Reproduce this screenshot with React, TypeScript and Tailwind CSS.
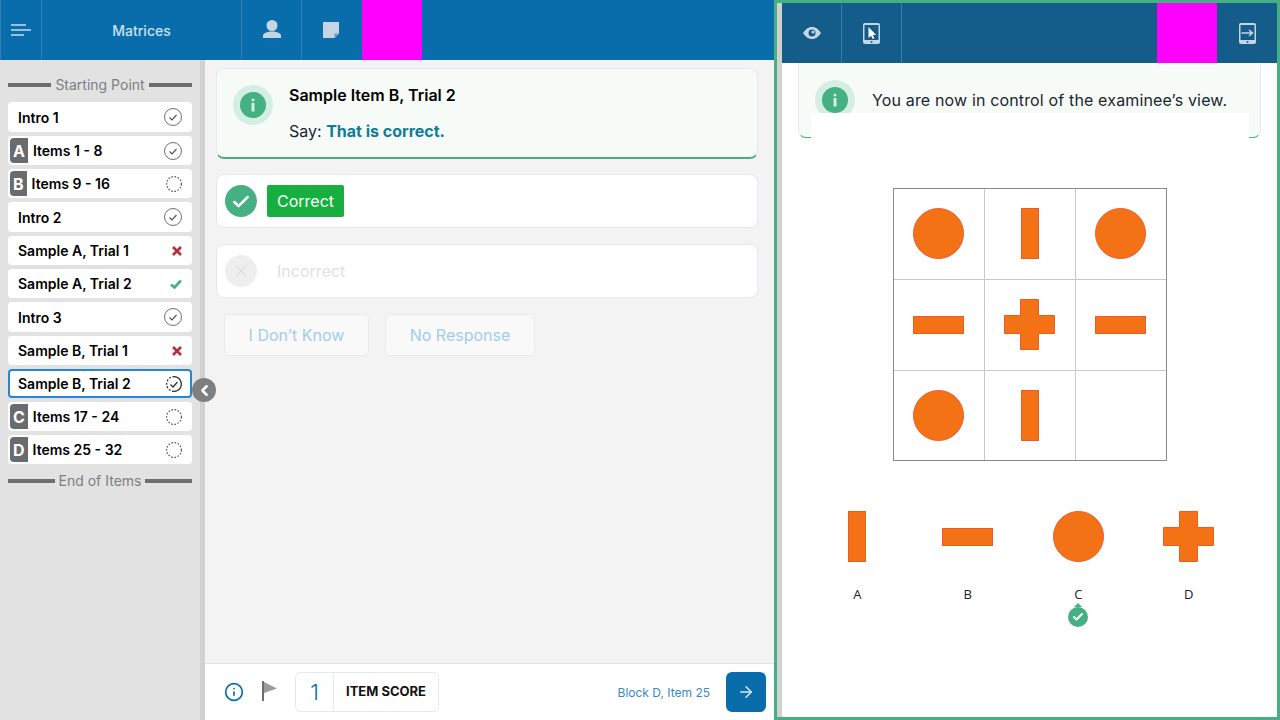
import type { ReactNode } from "react";
import { ArrowRight, Check, ChevronLeft, Info, X } from "lucide-react";

type Status = "done" | "todo" | "wrong" | "right" | "current";

type NavItem = {
  label: string;
  status: Status;
  letter?: string;
  tall?: boolean;
};

const navItems: NavItem[] = [
  { label: "Intro 1", status: "done", tall: true },
  { label: "Items 1 - 8", status: "done", letter: "A" },
  { label: "Items 9 - 16", status: "todo", letter: "B" },
  { label: "Intro 2", status: "done", tall: true },
  { label: "Sample A, Trial 1", status: "wrong" },
  { label: "Sample A, Trial 2", status: "right" },
  { label: "Intro 3", status: "done", tall: true },
  { label: "Sample B, Trial 1", status: "wrong" },
  { label: "Sample B, Trial 2", status: "current" },
  { label: "Items 17 - 24", status: "todo", letter: "C" },
  { label: "Items 25 - 32", status: "todo", letter: "D" },
];

function StatusIcon({ status }: { status: Status }) {
  if (status === "wrong") {
    return (
      <svg width="10" height="10" viewBox="0 0 10 10" stroke="#b92c38" strokeWidth="2.6">
        <path d="M1 1l8 8M9 1l-8 8" />
      </svg>
    );
  }
  if (status === "right") {
    return (
      <svg width="12" height="10" viewBox="0 0 12 10" fill="none" stroke="#45b081" strokeWidth="2.6">
        <path d="M1 5.500l3.500 3L11 1.500" />
      </svg>
    );
  }
  if (status === "todo") {
    return (
      <svg width="16" height="16" viewBox="0 0 16 16" fill="none">
        <circle cx="8" cy="8" r="7.400" stroke="#555" strokeWidth="1.200" strokeDasharray="1.600 1.600" />
      </svg>
    );
  }
  if (status === "current") {
    return (
      <svg width="16" height="16" viewBox="0 0 16 16" fill="none" stroke="#333">
        <path d="M8 .6A7.400 7.400 0 0 1 8 15.400" strokeWidth="1.300" />
        <path d="M8 15.400A7.400 7.400 0 0 1 8 .6" strokeWidth="1.300" strokeDasharray="2 1.600" />
        <path d="M4.500 8.500l2.500 2.500 4.500-5" strokeWidth="1.300" />
      </svg>
    );
  }
  return (
    <svg width="18" height="18" viewBox="0 0 18 18" fill="none">
      <circle cx="9" cy="9" r="8.500" stroke="#6f6f6f" strokeWidth="1" />
      <path d="M5.500 9.500l2.500 2.500 4.500-5" stroke="#555" strokeWidth="1.200" />
    </svg>
  );
}

function SideRow({ item }: { item: NavItem }) {
  const current = item.status === "current";
  return (
    <div
      className={`flex w-[184px] items-center justify-between rounded-[4px] bg-white ${
        item.tall ? "h-[30px]" : "h-[29px]"
      } ${current ? "border-2 border-[#2a85d0] pr-[8px]" : "pr-[10px]"} ${
        item.letter ? "pl-[2px]" : current ? "pl-[8px]" : "pl-[10px]"
      }`}
    >
      <div className="flex h-full items-center">
        {item.letter && (
          <span className="mr-[5px] flex h-[25px] items-center rounded-l-[4px] bg-[#686c6e] px-[3px] text-[16px] font-bold text-white">
            {item.letter}
          </span>
        )}
        <span className="text-[14px] font-semibold text-black">{item.label}</span>
      </div>
      <StatusIcon status={item.status} />
    </div>
  );
}

function SideHeading({ label, className }: { label: string; className: string }) {
  return (
    <div className={`flex h-[20px] w-[184px] items-center gap-[4px] ${className}`}>
      <div className="h-[4px] flex-1 bg-[#6c6f6e]" />
      <span className="pb-[2px] text-[14px] text-[#7b8085]">{label}</span>
      <div className="h-[4px] flex-1 bg-[#6c6f6e]" />
    </div>
  );
}

function InfoBadge() {
  return (
    <div className="flex h-[40px] w-[40px] shrink-0 items-center justify-center rounded-full bg-[#d5eee3]">
      <div className="flex h-[26px] w-[26px] items-center justify-center rounded-full bg-[#45b081]">
        <svg width="6" height="14" viewBox="0 0 6 14" fill="#d5eee3">
          <rect x="1.500" y="0.500" width="3" height="3" rx="1.500" />
          <rect x="1.500" y="5" width="3" height="8.500" rx="0.500" />
        </svg>
      </div>
    </div>
  );
}

function HeaderCell({ children, width }: { children: ReactNode; width: string }) {
  return (
    <div className={`flex h-full items-center justify-center border-r border-[#2f7fb5] ${width}`}>
      {children}
    </div>
  );
}

function TabletIcon({ arrow }: { arrow?: boolean }) {
  return (
    <svg width="17" height="21" viewBox="0 0 17 21">
      <rect width="17" height="21" rx="2" fill="#c5d5e3" />
      <rect x="1.500" y="2" width="14" height="15" fill="#145c8a" />
      <circle cx="8.500" cy="19" r="1" fill="#145c8a" />
      {arrow ? (
        <path d="M2.500 10h10.500M10 7l3.500 3-3.500 3" stroke="#c5d5e3" strokeWidth="1.500" fill="none" />
      ) : (
        <path d="M5.500 4v11l2.600-2.300 1.600 3.300 1.700-.8-1.600-3.200h3.400z" fill="#fff" />
      )}
    </svg>
  );
}

function ShapeCircle() {
  return <div className="h-[51px] w-[51px] rounded-full border border-[#f05a28] bg-[#f47216]" />;
}

function ShapeBar({ vertical }: { vertical?: boolean }) {
  return (
    <div
      className={`border border-[#f05a28] bg-[#f47216] ${
        vertical ? "h-[51px] w-[18px]" : "h-[18px] w-[51px]"
      }`}
    />
  );
}

function ShapeCross() {
  return (
    <svg width="51" height="51" viewBox="0 0 51 51">
      <path
        d="M16.500 .5h18v16h16v18h-16v16h-18v-16h-16v-18h16z"
        fill="#f47216"
        stroke="#f05a28"
        strokeWidth="1"
      />
    </svg>
  );
}

const matrix: ReactNode[] = [
  <ShapeCircle key="a" />,
  <ShapeBar key="b" vertical />,
  <ShapeCircle key="c" />,
  <ShapeBar key="d" />,
  <ShapeCross key="e" />,
  <ShapeBar key="f" />,
  <ShapeCircle key="g" />,
  <ShapeBar key="h" vertical />,
  null,
];

const answers = [
  { label: "A", shape: <ShapeBar vertical /> },
  { label: "B", shape: <ShapeBar /> },
  { label: "C", shape: <ShapeCircle /> },
  { label: "D", shape: <ShapeCross /> },
];

export default function App() {
  return (
    <div className="flex h-[720px] w-[1280px] overflow-hidden bg-white font-['Inter',sans-serif]">
      {/* examiner side */}
      <div className="flex h-full w-[774px] shrink-0 flex-col">
        <header className="flex h-[60px] shrink-0 bg-[#0a6dab]">
          <HeaderCell width="w-[42px] border-l border-l-[#2f7fb5]">
            <svg width="21" height="12" viewBox="0 0 21 12" stroke="#c9dcea" strokeWidth="1.600">
              <path d="M0 1h15M0 6h20M0 11h13" />
            </svg>
          </HeaderCell>
          <HeaderCell width="w-[200px]">
            <span className="text-[14px] font-medium text-[#c9e0f0]">Matrices</span>
          </HeaderCell>
          <HeaderCell width="w-[60px]">
            <svg width="18" height="18" viewBox="0 0 18 18" fill="#c5d5e3" className="mb-[2px]">
              <circle cx="9" cy="5.500" r="5.500" />
              <path d="M0 18v-2C0 13 4 11.500 9 11.500s9 1.500 9 4.500v2z" />
            </svg>
          </HeaderCell>
          <div className="flex h-full w-[60px] items-center justify-center pr-[2px]">
            <svg width="16" height="16" viewBox="0 0 16 16">
              <path d="M0 0h16v11.500L11.500 16H0z" fill="#c5d5e3" />
              <path d="M15.500 11.500l-4 4v-4z" fill="#6f93b0" />
            </svg>
          </div>
          <div className="h-full w-[60px] bg-[#ff00ff]" />
        </header>
        <div className="flex min-h-0 flex-1">
          <aside className="relative flex w-[205px] shrink-0 flex-col gap-[4px] border-r-[5px] border-[#d1d1d1] bg-[#e2e2e2] pl-[8px] pt-[15px]">
            <SideHeading label="Starting Point" className="mb-[3px]" />
            {navItems.map((item) => (
              <SideRow key={item.label} item={item} />
            ))}
            <SideHeading label="End of Items" className="mt-[3px]" />
            <button className="absolute left-[192px] top-[318px] flex h-[24px] w-[24px] items-center justify-center rounded-full bg-[#7d7f80] text-white">
              <ChevronLeft size={17} strokeWidth={3.500} />
            </button>
          </aside>
          <main className="flex min-w-0 flex-1 flex-col bg-[#f3f3f4]">
            <div className="flex flex-1 flex-col pl-[11px] pr-[16px] pt-[8px]">
              <div className="flex h-[91px] rounded-[8px] border border-b-2 border-[#e4e8f2] border-b-[#45b081] bg-[#f6fbf8] pl-[16px] pt-[16px]">
                <InfoBadge />
                <div className="ml-[16px]">
                  <div className="text-[16px] leading-[20px] font-semibold text-black">Sample Item B, Trial 2</div>
                  <div className="mt-[16px] text-[16px] leading-[20px] text-[#1c2530]">
                    Say: <span className="font-bold text-[#0f7d98]">That is correct.</span>
                  </div>
                </div>
              </div>
              <div className="mt-[15px] flex h-[54px] items-center rounded-[8px] border border-[#e4e8f2] bg-white pl-[8px]">
                <div className="flex h-[32px] w-[32px] items-center justify-center rounded-full bg-[#45b081] pt-[2px] text-white">
                  <Check size={20} strokeWidth={3} />
                </div>
                <div className="ml-[10px] flex h-[32px] w-[77px] items-center justify-center rounded-[2px] bg-[#17b03f] text-[16px] text-white">
                  Correct
                </div>
              </div>
              <div className="mt-[16px] flex h-[54px] items-center rounded-[8px] border border-[#e4e8f2] bg-white pl-[8px]">
                <div className="flex h-[32px] w-[32px] items-center justify-center rounded-full bg-[#eeeeee] text-[#dddddd]">
                  <X size={20} strokeWidth={1.500} />
                </div>
                <div className="ml-[20px] text-[16px] text-[#e1e1e3]">Incorrect</div>
              </div>
              <div className="ml-[8px] mt-[16px] flex gap-[16px]">
                <div className="flex h-[42px] w-[145px] items-center justify-center rounded-[6px] border border-[#ebebed] bg-[#f9f9fa] text-[16px] text-[#a3ccec]">
                  I Don’t Know
                </div>
                <div className="flex h-[42px] w-[150px] items-center justify-center rounded-[6px] border border-[#ebebed] bg-[#f9f9fa] text-[16px] text-[#a3ccec]">
                  No Response
                </div>
              </div>
            </div>
            <footer className="flex h-[57px] shrink-0 items-center border-t border-[#e2e2e2] bg-white pl-[19px] pr-[8px]">
              <Info size={20} strokeWidth={2} className="text-[#0a6dab]" />
              <svg width="16" height="20" viewBox="0 0 16 20" className="mb-[2px] ml-[18px]">
                <rect x="0" y="0" width="2" height="20" fill="#6c6f70" />
                <path d="M2 1l13 6.500L2 12z" fill="#9a9c9d" />
              </svg>
              <div className="ml-[17px] flex h-[40px] w-[144px] items-center rounded-[6px] border border-[#e4e8f2]">
                <div className="flex h-full w-[38px] items-center justify-center border-r border-[#e4e8f2] text-[22px] font-light text-[#0a6dab]">
                  1
                </div>
                <div className="ml-[12px] text-[13px] font-bold text-[#111]">ITEM SCORE</div>
              </div>
              <div className="ml-auto pt-[2px] text-[12px] text-[#3a88c4]">Block D, Item 25</div>
              <div className="ml-[16px] flex h-[40px] w-[40px] items-center justify-center rounded-[6px] bg-[#0a6dab] text-[#dbe8f2]">
                <ArrowRight size={18} strokeWidth={2} />
              </div>
            </footer>
          </main>
        </div>
      </div>

      {/* examinee side */}
      <div className="flex h-full min-w-0 flex-1 flex-col border-[3px] border-[#45b081]">
        <div className="flex min-h-0 flex-1 border-l-[5px] border-[#d1d1d1]">
          <div className="flex min-w-0 flex-1 flex-col">
            <header className="flex h-[60px] shrink-0 bg-[#145c8a]">
              <HeaderCell width="w-[60px]">
                <svg width="18" height="12" viewBox="0 0 18 12">
                  <path d="M0 6C3 1.500 6 0 9 0s6 1.500 9 6c-3 4.500-6 6-9 6s-6-1.500-9-6z" fill="#c5d5e3" />
                  <circle cx="9" cy="6" r="3.500" fill="#145c8a" />
                  <circle cx="10" cy="5" r="1.500" fill="#c5d5e3" />
                </svg>
              </HeaderCell>
              <HeaderCell width="w-[60px]">
                <TabletIcon />
              </HeaderCell>
              <div className="ml-auto h-full w-[60px] bg-[#ff00ff]" />
              <div className="flex h-full w-[60px] items-center justify-center">
                <TabletIcon arrow />
              </div>
            </header>
            <div className="flex min-h-0 flex-1 flex-col items-center">
              <div className="relative flex h-[75px] w-[463px] shrink-0 rounded-b-[8px] border border-t-0 border-[#e4e8f2] border-b-[#45b081] bg-[#f6fbf8] pl-[16px] pt-[17px]">
                <InfoBadge />
                <div className="ml-[17px] mt-[10px] text-[16px] leading-[20px] tracking-[0.15px] text-[#1c2530]">
                  You are now in control of the examinee’s view.
                </div>
                <div className="absolute bottom-[-2px] left-[12px] h-[26px] w-[438px] bg-white" />
              </div>
              <div className="mt-[50px] grid h-[273px] w-[274px] grid-cols-[91px_91px_90px] grid-rows-[91px_91px_89px] border border-[#8a8a8a]">
                {matrix.map((shape, i) => (
                  <div
                    key={i}
                    className={`flex items-center justify-center border-[#c8c8c8] ${i % 3 !== 2 ? "border-r" : ""} ${
                      i < 6 ? "border-b pb-[1px]" : ""
                    }`}
                  >
                    {shape}
                  </div>
                ))}
              </div>
              <div className="ml-[20px] mt-[50px] flex w-[442px] self-start">
                {answers.map((a) => (
                  <div key={a.label} className="relative flex flex-1 flex-col items-center">
                    <div className="flex h-[51px] items-center">{a.shape}</div>
                    <div className="mt-[23px] font-['Open_Sans',sans-serif] text-[13px] leading-[18px] text-[#222]">
                      {a.label}
                    </div>
                    {a.label === "C" && (
                      <div className="absolute left-1/2 top-[92px] flex -translate-x-1/2 flex-col items-center">
                        <div className="h-0 w-0 border-x-[4px] border-b-[4px] border-x-transparent border-b-[#45b081]" />
                        <div className="flex h-[20px] w-[20px] items-center justify-center rounded-full bg-[#45b081] text-white">
                          <Check size={12} strokeWidth={4} />
                        </div>
                      </div>
                    )}
                  </div>
                ))}
              </div>
            </div>
          </div>
        </div>
      </div>
    </div>
  );
}
